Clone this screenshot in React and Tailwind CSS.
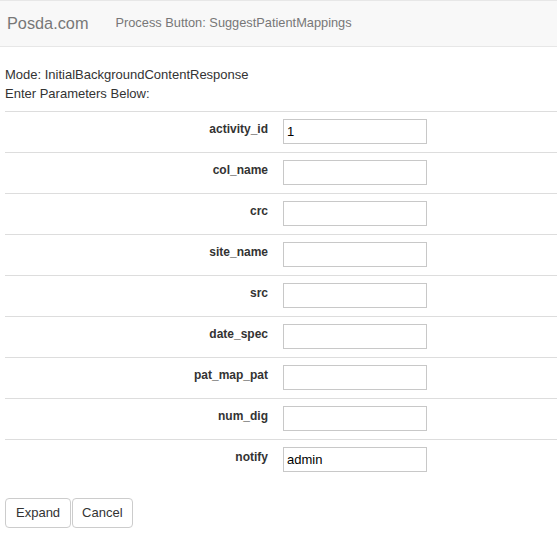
const PARAMS = [
  { name: 'activity_id', value: '1' },
  { name: 'col_name', value: '' },
  { name: 'crc', value: '' },
  { name: 'site_name', value: '' },
  { name: 'src', value: '' },
  { name: 'date_spec', value: '' },
  { name: 'pat_map_pat', value: '' },
  { name: 'num_dig', value: '' },
  { name: 'notify', value: 'admin' },
];

export default function App() {
  return (
    <div className="min-h-[543px] bg-white text-[13px] leading-[1.42857] text-[#333] font-['Liberation_Sans',Arial,sans-serif] overflow-hidden">
      {/* navbar */}
      <div className="h-[47px] bg-[#f8f8f8] border-y border-[#e7e7e7] flex items-center">
        <span className="pl-[7px] text-[16.3px] text-[#777]">Posda.com</span>
        <span className="pl-[27px] text-[12.8px] text-[#777]">Process Button: SuggestPatientMappings</span>
      </div>

      <div className="pl-[5px] pt-[19px]">
        <div>Mode: InitialBackgroundContentResponse</div>
        <div>Enter Parameters Below:</div>

        <table className="mt-[8px] w-[552px] border-collapse">
          <tbody>
            {PARAMS.map((p) => (
              <tr key={p.name} className="border-t border-[#ddd]">
                <td className="w-[271px] px-[8px] pt-[9px] pb-[8px] align-top text-right text-[12px] font-bold">{p.name}</td>
                <td className="px-[7px] pt-[7px] pb-[8px] align-top">
                  <input
                    type="text"
                    defaultValue={p.value}
                    className="block w-[144px] h-[25px] px-[3px] border border-[#c8c8c8] bg-white text-[13px] text-black outline-none"
                  />
                </td>
              </tr>
            ))}
          </tbody>
        </table>

        <div className="mt-[18px] flex">
          <button type="button" className="h-[30px] px-[10px] border border-[#ccc] rounded-[4px] bg-white text-[13px] text-[#333]">
            Expand
          </button>
          <button type="button" className="h-[30px] ml-[1px] px-[9px] border border-[#ccc] rounded-[4px] bg-white text-[13px] text-[#333]">
            Cancel
          </button>
        </div>
      </div>
    </div>
  );
}
